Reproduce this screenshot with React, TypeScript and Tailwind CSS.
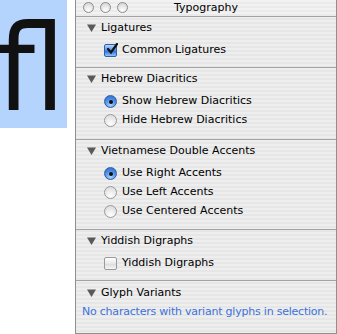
import React from 'react';

const stripes =
  'bg-[repeating-linear-gradient(to_bottom,#eeeeee_0px,#eeeeee_2px,#e6e6e6_2px,#e6e6e6_4px)]';

function Triangle() {
  return (
    <svg width="9" height="8" viewBox="0 0 9 8" className="shrink-0">
      <path d="M0 0.5 L9 0.5 L4.5 8 Z" fill="#595959" />
    </svg>
  );
}

function Checkbox({ checked }: { checked: boolean }) {
  if (checked) {
    return (
      <span className="relative flex h-[13px] w-[13px] shrink-0 items-center justify-center rounded-[2px] border border-[#2f5fa8] bg-[linear-gradient(to_bottom,#b8d8ff,#4f8ee6_50%,#2e6fd6_55%,#8cc4ff)]">
        <svg width="12" height="12" viewBox="0 0 12 12" className="absolute -top-[2px] left-[1px]">
          <path d="M2 6 L5 9.5 L11 1" stroke="#111" strokeWidth="2.2" fill="none" strokeLinecap="round" />
        </svg>
      </span>
    );
  }
  return (
    <span className="h-[13px] w-[13px] shrink-0 rounded-[2px] border border-[#9a9a9a] bg-[linear-gradient(to_bottom,#ffffff,#e8e8e8_50%,#dcdcdc_55%,#f6f6f6)]" />
  );
}

function Radio({ checked }: { checked: boolean }) {
  if (checked) {
    return (
      <span className="flex h-[13px] w-[13px] shrink-0 items-center justify-center rounded-full border border-[#2f5fa8] bg-[radial-gradient(circle_at_50%_80%,#a8d6ff,#4a8ae4_55%,#2b68cf)]">
        <span className="h-[4px] w-[4px] rounded-full bg-[#111]" />
      </span>
    );
  }
  return (
    <span className="h-[13px] w-[13px] shrink-0 rounded-full border border-[#9a9a9a] bg-[radial-gradient(circle_at_50%_80%,#ffffff,#e6e6e6_60%,#d4d4d4)]" />
  );
}

function Section({
  title,
  height,
  children,
}: {
  title: string;
  height: string;
  children: React.ReactNode;
}) {
  return (
    <div className={`${height} shrink-0 border-b border-[#a3a3a3]`}>
      <div className="flex h-[18px] items-center gap-[5px] pl-[11px] mt-[2px]">
        <Triangle />
        <span>{title}</span>
      </div>
      <div className="mt-[4px]">{children}</div>
    </div>
  );
}

function Option({ kind, checked, label }: { kind: 'check' | 'radio'; checked: boolean; label: string }) {
  return (
    <div className="flex h-[19px] items-center gap-[5px] pl-[28px]">
      {kind === 'check' ? <Checkbox checked={checked} /> : <Radio checked={checked} />}
      <span>{label}</span>
    </div>
  );
}

export default function App() {
  return (
    <div className="flex h-[334px] w-[337px] overflow-hidden bg-white font-['DejaVu_Sans',sans-serif] text-[11px] text-black">
      <div className="flex h-[128px] w-[67px] shrink-0 items-start justify-start overflow-hidden bg-[#b5d4fd]">
        <span className="ml-[-3px] mt-[-3px] w-[66px] whitespace-nowrap font-['DejaVu_Sans_Condensed','DejaVu_Sans',sans-serif] text-[120px] leading-[1.2] text-[#111]">
          ﬂ
        </span>
      </div>
      <div
        className={`ml-[8px] flex h-[334px] w-[262px] shrink-0 flex-col border-x border-b border-[#8f8f8f] ${stripes}`}
      >
        <div className="relative flex h-[17px] shrink-0 items-center justify-center border-b border-[#a3a3a3] bg-[repeating-linear-gradient(to_bottom,#f2f2f2_0px,#f2f2f2_2px,#eaeaea_2px,#eaeaea_4px)]">
          <div className="absolute left-[7px] top-[2px] flex gap-[6px]">
            {[0, 1, 2].map((i) => (
              <span
                key={i}
                className="h-[11px] w-[11px] rounded-full border border-[#8c8c8c] bg-[radial-gradient(circle_at_50%_80%,#ffffff,#e2e2e2_60%,#cfcfcf)]"
              />
            ))}
          </div>
          <span className="text-[11px]">Typography</span>
        </div>

        <Section title="Ligatures" height="h-[51px]">
          <Option kind="check" checked label="Common Ligatures" />
        </Section>

        <Section title="Hebrew Diacritics" height="h-[72px]">
          <Option kind="radio" checked label="Show Hebrew Diacritics" />
          <Option kind="radio" checked={false} label="Hide Hebrew Diacritics" />
        </Section>

        <Section title="Vietnamese Double Accents" height="h-[90px]">
          <Option kind="radio" checked label="Use Right Accents" />
          <Option kind="radio" checked={false} label="Use Left Accents" />
          <Option kind="radio" checked={false} label="Use Centered Accents" />
        </Section>

        <Section title="Yiddish Digraphs" height="h-[51px]">
          <Option kind="check" checked={false} label="Yiddish Digraphs" />
        </Section>

        <div className="flex-1">
          <div className="mt-[3px] flex h-[18px] items-center gap-[5px] pl-[11px]">
            <Triangle />
            <span>Glyph Variants</span>
          </div>
          <div className="mt-[2px] whitespace-nowrap pl-[6px] tracking-[-0.22px] text-[#3c72dc]">
            No characters with variant glyphs in selection.
          </div>
        </div>
      </div>
    </div>
  );
}
